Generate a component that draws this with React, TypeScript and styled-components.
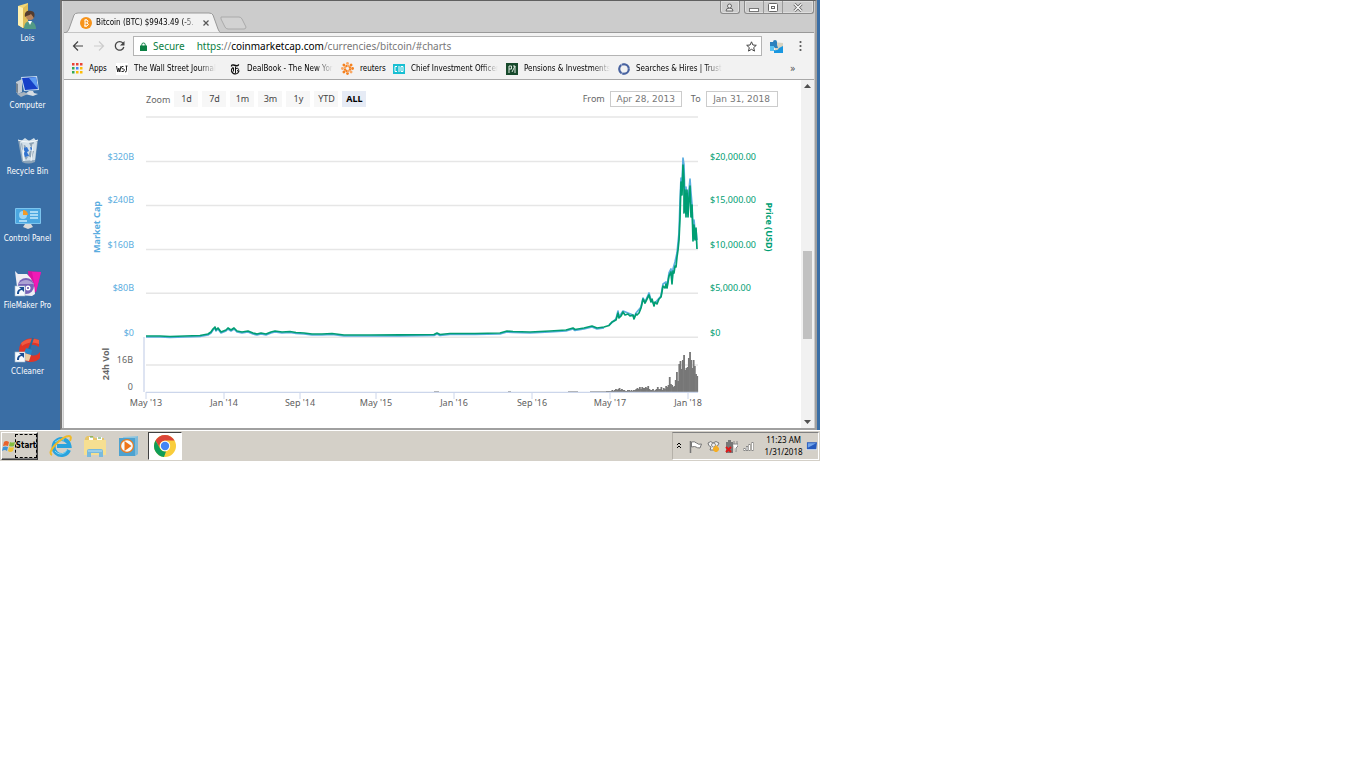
import React from "react";

import styled, { createGlobalStyle } from "styled-components";

const UI_FONT = `"DejaVu Sans Condensed", "Noto Sans", sans-serif`;
const CHART_FONT = `"Noto Sans", sans-serif`;

const GlobalStyle = createGlobalStyle`
  * {
    box-sizing: border-box;
  }
  body {
    margin: 0;
    background: #ffffff;
    font-family: ${UI_FONT};
    font-size: 8px;
    color: #000000;
  }
  button, input, a {
    font-family: inherit;
    font-size: inherit;
    color: inherit;
    padding: 0;
    margin: 0;
    border: 0;
    background: none;
    text-decoration: none;
  }
  svg {
    display: block;
    flex-shrink: 0;
  }
`;

const Screen = styled.div`
  width: 60vw;
  min-width: 819px;
  display: flex;
  flex-direction: column;
`;

const Workspace = styled.div`
  display: flex;
  min-height: 430px;
  background: #3a6ea5;
`;

const DesktopIcons = styled.nav`
  width: 60px;
  height: 400px;
  padding-right: 5px;
  display: grid;
  grid-template-rows: repeat(6, 1fr);
`;

const DesktopIcon = styled.button`
  display: flex;
  flex-direction: column;
  align-items: center;
  gap: 3px;
  padding-top: 3px;
  color: #ffffff;
  line-height: 10px;
  white-space: nowrap;
  cursor: pointer;
`;

const BrowserWindow = styled.main`
  flex: 1;
  min-width: 0;
  margin-right: 3px;
  display: flex;
  flex-direction: column;
  background: #cccccc;
  border: 2px solid #a0a0a0;
  border-top: 1px solid #606060;
  border-left-color: #757575;
  box-shadow: inset 1px 0 #e0e0e0;
  padding: 0 1px 0 2px;
`;

const TitleBar = styled.div`
  height: 31px;
  display: flex;
  align-items: flex-start;
  justify-content: space-between;
`;

const TabStrip = styled.div`
  display: flex;
  padding: 11px 0 0 1px;
`;

const Tab = styled.div`
  position: relative;
  width: 157px;
  height: 21px;
  display: flex;
  align-items: center;
  padding: 0 12px 0 15px;
  gap: 4px;
`;

const TabShape = styled.svg`
  position: absolute;
  top: 0;
  left: 0;
`;

const TabTitle = styled.span`
  position: relative;
  flex: 1;
  overflow: hidden;
  white-space: nowrap;
  line-height: 12px;
  mask-image: linear-gradient(to right, #000 85%, transparent);
`;

const IconButton = styled.button`
  position: relative;
  display: flex;
  align-items: center;
  justify-content: center;
  cursor: pointer;
`;

const NewTab = styled(IconButton)`
  align-items: flex-start;
  padding-top: 4px;
  margin-left: -2px;
`;

const WindowControls = styled.div`
  display: flex;
  gap: 4px;
`;

const ControlGroup = styled.div`
  display: flex;
  height: 13px;
  border: 1px solid #8a8a8a;
  border-top: 0;
  border-radius: 0 0 3px 3px;
  box-shadow: inset 0 0 0 1px #dedede;
`;

const ControlButton = styled(IconButton)<{ $width: number }>`
  width: ${(p) => p.$width}px;
  & + & {
    border-left: 1px solid #999999;
  }
`;

const Toolbar = styled.div`
  height: 26px;
  display: flex;
  align-items: center;
  gap: 8px;
  padding: 1px 8px 0 8px;
  background: #f2f2f2;
  border-top: 1px solid #999999;
`;

const NavButtons = styled.div`
  display: flex;
  gap: 9px;
`;

const Extensions = styled.div`
  display: flex;
  gap: 12px;
`;

const Omnibox = styled.div`
  flex: 1;
  height: 20px;
  display: flex;
  align-items: center;
  padding: 0 4px 0 6px;
  background: #ffffff;
  border: 1px solid #b4b4b4;
  font-family: ${CHART_FONT};
  font-size: 10px;
  line-height: 14px;
`;

const Secure = styled.span`
  color: #0b8043;
  margin: 0 12px 0 6px;
`;

const Url = styled.a`
  flex: 1;
  color: #777777;
  white-space: nowrap;
`;

const Scheme = styled.span`
  color: #0b8043;
`;

const Host = styled.span`
  color: #000000;
`;

const Bookmarks = styled.nav`
  height: 22px;
  display: flex;
  align-items: center;
  padding: 0 18px 0 8px;
  background: #f2f2f2;
  border-bottom: 1px solid #a8a8a8;
`;

const Bookmark = styled.a<{ $width: number; $fade?: boolean }>`
  width: ${(p) => p.$width}px;
  display: flex;
  align-items: center;
  gap: 6px;
  line-height: 12px;
  white-space: nowrap;
  span {
    overflow: ${(p) => (p.$fade ? "hidden" : "visible")};
    margin-right: ${(p) => (p.$fade ? 8 : 0)}px;
    mask-image: ${(p) =>
      p.$fade ? "linear-gradient(to right, #000 80%, transparent)" : "none"};
  }
`;

const More = styled.button`
  margin-left: auto;
  font-size: 10px;
  color: #444444;
`;

const Page = styled.section`
  flex: 1;
  display: flex;
  background: #ffffff;
`;

const ChartArea = styled.div`
  flex: 1;
  min-width: 0;
  padding-top: 11px;
  font-family: ${CHART_FONT};
  font-size: 9px;
  color: #666666;
`;

const Controls = styled.div`
  display: flex;
  justify-content: space-between;
  align-items: center;
  padding: 0 23px 0 82px;
  height: 16px;
`;

const Range = styled.div`
  display: flex;
  align-items: center;
  gap: 4px;
`;

const RangeButton = styled.button<{ $active?: boolean }>`
  width: 24px;
  height: 16px;
  line-height: 14px;
  color: ${(p) => (p.$active ? "#000000" : "#444444")};
  font-weight: ${(p) => (p.$active ? 700 : 400)};
  background: ${(p) => (p.$active ? "#e6ebf5" : "#f7f7f7")};
  cursor: pointer;
`;

const DateLabel = styled.label`
  display: flex;
  align-items: center;
  gap: 5px;
  margin-left: 5px;
  line-height: 14px;
`;

const DateInput = styled.input`
  width: 72px;
  height: 16px;
  padding: 0 4px;
  border: 1px solid #cccccc;
  font-family: "DejaVu Sans", sans-serif;
  font-size: 9px;
  text-align: center;
  color: #777777;
`;

const Plot = styled.svg`
  width: 100%;
  height: 310px;
  margin-top: 1px;
`;

const Scrollbar = styled.div`
  width: 13px;
  display: flex;
  flex-direction: column;
  align-items: center;
  justify-content: space-between;
  background: #f1f1f1;
`;

const Thumb = styled.div`
  width: 9px;
  height: 88px;
  margin-top: 81px;
  background: #c1c1c1;
`;

const Taskbar = styled.footer`
  height: 31px;
  display: flex;
  align-items: center;
  padding: 1px 1px 0 1px;
  background: #d4d0c8;
  box-shadow: inset 0 1px #ffffff;
`;

const StartButton = styled.button`
  width: 37px;
  height: 28px;
  display: flex;
  align-items: center;
  border: 1px solid #404040;
  border-top-color: #ffffff;
  border-left-color: #ffffff;
  box-shadow: inset -1px -1px #808080;
  font-weight: 700;
  cursor: pointer;
`;

const StartLabel = styled.span`
  height: 24px;
  width: 22px;
  line-height: 24px;
  outline: 1px dashed #000000;
  outline-offset: -1px;
  display: flex;
  justify-content: center;
`;

const Launchers = styled.div`
  display: flex;
  padding-left: 6px;
`;

const Launcher = styled(IconButton)<{ $active?: boolean }>`
  width: 34px;
  height: 28px;
  margin-left: ${(p) => (p.$active ? 2 : 0)}px;
  background: ${(p) => (p.$active ? "#ffffff" : "transparent")};
  border: 1px solid ${(p) => (p.$active ? "#ffffff" : "transparent")};
  border-top-color: ${(p) => (p.$active ? "#404040" : "transparent")};
  border-left-color: ${(p) => (p.$active ? "#404040" : "transparent")};
`;

const Tray = styled.div`
  margin-left: auto;
  width: 147px;
  height: 28px;
  display: flex;
  align-items: center;
  padding: 0 1px 0 4px;
  border: 1px solid #ffffff;
  border-top-color: #808080;
  border-left-color: #b5b1a9;
`;

const TrayIcons = styled.div`
  display: flex;
  align-items: center;
  gap: 5px;
  margin-left: 8px;
`;

const Clock = styled.time`
  margin-left: auto;
  margin-right: 3px;
  line-height: 12px;
  text-align: center;
  font-family: ${CHART_FONT};
  white-space: nowrap;
`;

const UserIcon = () => (
  <svg width="26" height="28" viewBox="0 0 26 28">
    <path d="M3 3l10-3v22l-5 3-5-3z" fill="#f3d775" />
    <path d="M3 3l5 2v20l-5-3z" fill="#fff0ae" />
    <path d="M8 5l5-4v21l-5 3z" fill="#e0bd57" />
    <path d="M9 26c0-6 3-8 6-8s6 3 6 8z" fill="#539b86" />
    <path d="M13 18l2 4 2-4z" fill="#ffffff" />
    <circle cx="15" cy="13" r="4" fill="#b8845c" />
    <path d="M10 14c-1-6 3-7 6-6 4 0 4 4 3 7l-3-4c-2 2-4 1-6 3z" fill="#533c2f" />
  </svg>
);

const ComputerIcon = () => (
  <svg width="26" height="28" viewBox="0 0 26 28">
    <path d="M1 12l6-3v13l-4 2-2-2z" fill="#c2cbd4" />
    <path d="M1 13l2 1v9l-2-1z" fill="#76838f" />
    <path d="M6 7l16-1 2 14-15 1z" fill="#c8dcf0" />
    <path d="M7 8l14-1 2 12-13 1z" fill="#1640c8" />
    <path d="M14 8l7-1 2 12z" fill="#5d9bf2" />
    <path d="M14 21l4 0 1 2 4 1-5 2-8-2z" fill="#d7dde3" />
    <path d="M2 24l7-2 4 2-7 3z" fill="#a8b3bd" />
  </svg>
);

const RecycleIcon = () => (
  <svg width="26" height="28" viewBox="0 0 26 28">
    <path d="M3 4l20 0-3 22q-7 3-13 0z" fill="#8ba3b8" />
    <path d="M5 6l5-4 4 3 5-3 3 4-2 18-12 1z" fill="#d3e0e9" />
    <path d="M6 7l5 3-2 6-2-3zM14 7l5-1-2 7zM15 15l4 0-2 7-4-2zM9 20l4 1-2 3z" fill="#8ea4b6" />
    <path d="M8 12l4-1 2 4-2 1 2 4-4 1-2-4 2-1zM15 11l3 1-2 3z" fill="#3173cf" />
    <path d="M3 4q10 4 20 0M8 8l1 17M18 8l-2 17" fill="none" stroke="#f4f9fb" />
  </svg>
);

const ControlPanelIcon = () => (
  <svg width="28" height="28" viewBox="0 0 28 28">
    <rect x="1" y="5" width="26" height="16" rx="1" fill="#7cc4ee" />
    <rect x="2" y="6" width="24" height="14" fill="#4aa6e0" />
    <circle cx="9" cy="12" r="4" fill="#9ad4f5" />
    <path d="M9 12V7a5 5 0 0 1 5 5z" fill="#f39a27" />
    <path d="M16 9h8M16 12h8M16 15h8M5 18h8" stroke="#c9ebfb" strokeWidth="1.4" />
    <path d="M11 21h6l2 3-5 2-5-2z" fill="#dadada" />
  </svg>
);

const Shortcut = () => (
  <>
    <rect x="1" y="16" width="10" height="10" fill="#f7fbff" stroke="#a4b8ca" strokeWidth=".6" />
    <path d="M3 24c0-4 2-5 4-5l-2-2h5v5l-2-2c-2 0-3 1-3 4z" fill="#1c4f93" />
  </>
);

const FileMakerIcon = () => (
  <svg width="28" height="28" viewBox="0 0 28 28">
    <path d="M14 1l13 1-5 20-6 2z" fill="#d813a4" />
    <path d="M18 2l9 0-5 20z" fill="#f01ab6" />
    <path d="M1 1l3 3h9q8 7 8 20l-3 2-14-1z" fill="#f0eef4" />
    <circle cx="12" cy="16" r="8" fill="#7763b7" />
    <path d="M4 14q8-8 16 0z" fill="#aca2d3" />
    <circle cx="14" cy="18" r="2.5" fill="#ffffff" />
    <circle cx="14" cy="18" r="1" fill="#5f4aa4" />
    <Shortcut />
  </svg>
);

const CCleanerIcon = () => (
  <svg width="28" height="28" viewBox="0 0 28 28">
    <path d="M25 4Q19 1 13 3 5 6 5 15q1 10 11 11 7 0 10-4v-6q-4 5-9 3-4-2-3-6 2-5 7-4l4 2z" fill="#df3528" />
    <path d="M7 7q7-6 18-3v4Q16 4 8 10z" fill="#f05a42" />
    <path d="M19 2l-4 12" stroke="#226b9d" strokeWidth="2" />
    <path d="M12 12l6 2-1 5-7-2z" fill="#2685c7" />
    <path d="M10 17l7 2-2 6-6-1z" fill="#eacda2" />
    <Shortcut />
  </svg>
);

const desktopItems = [
  { name: "Lois", Icon: UserIcon },
  { name: "Computer", Icon: ComputerIcon },
  { name: "Recycle Bin", Icon: RecycleIcon },
  { name: "Control Panel", Icon: ControlPanelIcon },
  { name: "FileMaker Pro", Icon: FileMakerIcon },
  { name: "CCleaner", Icon: CCleanerIcon },
];

const AppsIcon = () => (
  <svg width="11" height="11" viewBox="0 0 11 11">
    {["#ea4335", "#ea4335", "#ea4335", "#34a853", "#4285f4", "#fbbc05", "#34a853", "#fbbc05", "#fbbc05"].map(
      (fill, i) => (
        <rect key={i} x={(i % 3) * 4} y={Math.floor(i / 3) * 4} width="2.500" height="2.500" fill={fill} />
      )
    )}
  </svg>
);

const WsjIcon = () => (
  <svg width="12" height="12" viewBox="0 0 12 12">
    <rect width="12" height="12" fill="#ffffff" />
    <path
      d="M.500 3l1.300 6 1-4 1 4L5 3M7.500 3.500q-2-.5-2 1t2 1.500 0 2.500h-2M9 9q1.500 0 1.500-1.500V3M9.500 3h2"
      fill="none"
      stroke="#222222"
    />
  </svg>
);

const TimesIcon = () => (
  <svg width="11" height="12" viewBox="0 0 11 12">
    <path d="M1.500 3.500q0-2 2-1.500l3 .8q2 .2 2-1.500" fill="none" stroke="#111111" strokeWidth="1.400" />
    <path d="M3 4.500q-2 1.500-1.500 3.500 1 3 4 3 3-.5 3.500-3.500" fill="none" stroke="#111111" strokeWidth="1.200" />
    <path d="M5.500 3.500v7M3.500 4.500v4M5.500 5.500q3-1 3 .8t-1.500 1.500" fill="none" stroke="#111111" />
  </svg>
);

const ReutersIcon = () => (
  <svg width="13" height="13" viewBox="0 0 13 13">
    {[0, 1, 2, 3, 4, 5, 6, 7].map((i) => (
      <g key={i} transform={`rotate(${i * 45} 6.5 6.5)`} fill={i % 3 ? "#f58220" : "#f9a763"}>
        <circle cx="6.5" cy="1.4" r="1.4" />
        <circle cx="7.5" cy="4" r="1.2" />
      </g>
    ))}
  </svg>
);

const CioIcon = () => (
  <svg width="12" height="12" viewBox="0 0 12 12">
    <rect y="1" width="12" height="10" fill="#18bfd2" />
    <path d="M4 3.500H2v5h2M6 3v6M8 3.500h2v5H8z" fill="none" stroke="#ffffff" />
  </svg>
);

const PensionsIcon = () => (
  <svg width="12" height="12" viewBox="0 0 12 12">
    <rect width="12" height="12" fill="#174a2c" />
    <path d="M3 10V3h2.500v3H3M6 9l3-6v7M7 3h2" fill="none" stroke="#dce8df" />
  </svg>
);

const RingIcon = () => (
  <svg width="12" height="12" viewBox="0 0 12 12">
    <circle cx="6" cy="6" r="4.800" fill="none" stroke="#9fb0d4" strokeWidth="2" />
    <circle cx="6" cy="6" r="4.800" fill="none" stroke="#49639f" strokeWidth="2" strokeDasharray="9 1" />
  </svg>
);

const bookmarks = [
  { name: "Apps", Icon: AppsIcon, width: 44 },
  { name: "The Wall Street Journal", Icon: WsjIcon, width: 114, fade: true },
  { name: "DealBook - The New York", Icon: TimesIcon, width: 111, fade: true },
  { name: "reuters", Icon: ReutersIcon, width: 52 },
  { name: "Chief Investment Officer", Icon: CioIcon, width: 113, fade: true },
  { name: "Pensions & Investments", Icon: PensionsIcon, width: 112, fade: true },
  { name: "Searches & Hires | Trust", Icon: RingIcon, width: 114, fade: true },
];

const ranges = ["1d", "7d", "1m", "3m", "1y", "YTD", "ALL"];

const xTicks: [number, string][] = [
  [146, "May '13"],
  [224, "Jan '14"],
  [300, "Sep '14"],
  [376, "May '15"],
  [454, "Jan '16"],
  [532, "Sep '16"],
  [610, "May '17"],
  [688, "Jan '18"],
];

const yTicks: [number, string, string][] = [
  [160, "$320B", "$20,000.00"],
  [203, "$240B", "$15,000.00"],
  [248, "$160B", "$10,000.00"],
  [291, "$80B", "$5,000.00"],
  [336, "$0", "$0"],
];

const earlyPrice =
  "146,336 160,336 170,336.500 185,336 200,335.500 208,334 211,332 213,329 215,327 216,330 218,328 221,332 226,330 228,328 231,330 234,328 237,331 242,332 248,331 253,333 257,334 261,333 266,334 271,332 275,331 282,332 290,331.500 296,332.500 304,333 312,334 322,334 332,333.500 344,335 370,335 400,334.800 434,334.500 437,333 440,334.500 450,333.500 475,333.500 500,333 507,331 513,331.500 530,332 550,331 566,330 573,328 575,329.500 584,328 592,326 597,328 604,327";
const latePrice =
  "609,325.500 612,322 616,320 618,313 619,318 621,316 623,312 625,315 628,314 630,316 633,315 634,319 636,314 637,315 639,313 641,308 643,299 645,303 647,299 649,295 651,302 652,299 654,306 655,302 657,304 659,299 661,297 663,286 665,288 666,284 667,288 669,276 671,272 672,284 673,271 674,273 675,266 676,267 677,257 678,250 679,240 680,218 681,182 682,195 683,165 684,180 684,213 685,190 686,217 687,190 688,217 689,198 690,186 691,217 692,205 693,241 694,225 695,240 696,228 697,249";
const lateCap =
  "609,325 616,319 618,311 619,317 623,311 633,315 634,318 636,313 641,307 643,298 645,302 649,293 651,300 654,304 661,296 663,284 666,282 667,287 669,273 671,269 672,281 673,269 675,262 677,253 679,233 680,202 681,178 682,186 683,158 684,165 685,203 686,187 687,205 688,207 689,190 690,179 691,193 692,204 693,229 694,220 695,231 696,230 697,240";

const volume = [
  1, 1, 1, 1, 1, 2, 1, 2, 3, 2, 3, 4, 2, 3, 2, 2, 1, 1, 2, 2, 1, 2, 1, 2, 2, 3, 4, 3, 5, 3, 5, 4, 4, 5, 4, 6, 3, 2, 2, 3,
  1, 2, 3, 5, 3, 3, 5, 2, 4, 3, 6, 5, 7, 15, 8, 7, 5, 6, 12, 20, 11, 28, 31, 23, 32, 37, 22, 24, 25, 34, 40, 32, 24, 32, 26,
  18, 16,
];

const PriceChart = () => (
  <Plot viewBox="64 108 736 310" preserveAspectRatio="xMinYMin meet" role="img" aria-label="Bitcoin charts">
    <g stroke="#e6e6e6" strokeWidth="1.500">
      {[117, 161.5, 205.5, 249.5, 293.300, 337.200, 365].map((y) => (
        <path key={y} d={`M146 ${y}H698`} />
      ))}
    </g>
    <g fill="#777777">
      {volume.map((h, i) => (
        <rect key={i} x={605.5 + i * 1.195} y={392 - h} width="1.800" height={h} />
      ))}
    </g>
    <path d="M434 391.500h5M508 391.500h3M568 391.500h10M590 391.500h16" stroke="#aaaaaa" />
    <path d="M144 337V392" stroke="#ccd6eb" strokeWidth="1.300" />
    <path d="M146 392.300H698" stroke="#ccd6eb" strokeWidth="1.300" />
    {xTicks.map(([x, label]) => (
      <g key={label}>
        <path d={`M${x} 392v7`} stroke="#ccd6eb" />
        <text x={x} y="406" textAnchor="middle" fill="#606060" fontSize="9">
          {label}
        </text>
      </g>
    ))}
    <g fill="none" strokeLinejoin="round" strokeWidth="1.700">
      <polyline points={earlyPrice} transform="translate(0 1)" stroke="#5bade0" />
      <polyline points={lateCap} stroke="#5bade0" />
      <polyline points={`${earlyPrice} ${latePrice}`} stroke="#009e73" />
    </g>
    <g fontSize="9">
      {yTicks.map(([y, cap, price]) => (
        <g key={y}>
          <text x="134" y={y} textAnchor="end" fill="#5bade0">
            {cap}
          </text>
          <text x="710" y={y} fill="#009e73">
            {price}
          </text>
        </g>
      ))}
      <text x="133" y="363" textAnchor="end" fill="#666666">
        16B
      </text>
      <text x="133" y="390" textAnchor="end" fill="#666666">
        0
      </text>
      <g fontWeight="700" textAnchor="middle">
        <text transform="translate(100 227) rotate(-90)" fill="#5bade0">
          Market Cap
        </text>
        <text transform="translate(766 227) rotate(90)" fill="#009e73">
          Price (USD)
        </text>
        <text transform="translate(109 364) rotate(-90)" fill="#666666">
          24h Vol
        </text>
      </g>
    </g>
  </Plot>
);

const Arrow = ({ color, flip }: { color: string; flip?: boolean }) => (
  <svg width="12" height="12" viewBox="0 0 12 12">
    <path
      d={flip ? "M1 6h9M6 1.500L10.500 6 6 10.500" : "M11 6H2M6 1.500L1.500 6 6 10.500"}
      fill="none"
      stroke={color}
      strokeWidth="1.200"
    />
  </svg>
);

function Browser() {
  const [range, setRange] = React.useState("ALL");

  return (
    <BrowserWindow>
      <TitleBar>
        <TabStrip>
          <Tab>
            <TabShape width="156" height="21" viewBox="0 0 156 21">
              <path d="M0 21Q3 20 4 17L9 3q1-2 4-2h131q3 0 4 2l5 14q1 3 3 4z" fill="#f2f2f2" stroke="#999999" />
            </TabShape>
            <IconButton as="span">
              <svg width="12" height="12" viewBox="0 0 12 12">
                <circle cx="6" cy="6" r="6" fill="#f7931a" />
                <path d="M4.500 3h2.500q2 1 0 3 3 1 0 3H4M5 3v6M5 6h2M6 2v1M6 9v1" fill="none" stroke="#ffffff" />
              </svg>
            </IconButton>
            <TabTitle>Bitcoin (BTC) $9943.49 (-5.</TabTitle>
            <IconButton aria-label="Close tab">
              <svg width="8" height="8" viewBox="0 0 8 8">
                <path d="M1.500 1.500l5 5M6.500 1.500l-5 5" stroke="#555555" strokeWidth="1.200" />
              </svg>
            </IconButton>
          </Tab>
          <NewTab aria-label="New tab">
            <svg width="27" height="14" viewBox="0 0 27 14">
              <path d="M1 1h18q2 0 3 2l4 8q0 2-2 2H8q-2 0-3-2L1 3z" fill="#d2d2d2" stroke="#aaaaaa" />
            </svg>
          </NewTab>
        </TabStrip>
        <WindowControls>
          <ControlGroup>
            <ControlButton $width={18} aria-label="Profile">
              <svg width="9" height="9" viewBox="0 0 9 9" fill="#eeeeee" stroke="#666666">
                <path d="M1 8q0-3 3.500-3T8 8z" />
                <circle cx="4.500" cy="3" r="2" />
              </svg>
            </ControlButton>
          </ControlGroup>
          <ControlGroup>
            <ControlButton $width={18} aria-label="Minimize">
              <svg width="10" height="9" viewBox="0 0 10 9">
                <rect x=".5" y="5.500" width="9" height="3" fill="#ffffff" stroke="#777777" />
              </svg>
            </ControlButton>
            <ControlButton $width={19} aria-label="Restore">
              <svg width="10" height="9" viewBox="0 0 10 9">
                <rect x=".5" y=".5" width="9" height="8" rx="1" fill="#ffffff" stroke="#666666" />
                <rect x="3.500" y="3.500" width="3" height="2" fill="#ffffff" stroke="#666666" />
              </svg>
            </ControlButton>
            <ControlButton $width={31} aria-label="Close">
              <svg width="10" height="9" viewBox="0 0 10 9">
                <path d="M1.500 1l7 7M8.500 1l-7 7" stroke="#666666" strokeWidth="3" />
                <path d="M1.500 1l7 7M8.500 1l-7 7" stroke="#ffffff" strokeWidth="1.300" />
              </svg>
            </ControlButton>
          </ControlGroup>
        </WindowControls>
      </TitleBar>
      <Toolbar>
        <NavButtons>
          <IconButton aria-label="Back">
            <Arrow color="#444444" />
          </IconButton>
          <IconButton aria-label="Forward">
            <Arrow color="#cccccc" flip />
          </IconButton>
          <IconButton aria-label="Reload">
            <svg width="11" height="12" viewBox="0 0 11 12">
              <path d="M9 3.200A4.300 4.300 0 1 0 9.800 7" fill="none" stroke="#444444" strokeWidth="1.300" />
              <path d="M10.500 1v4.500H6z" fill="#444444" />
            </svg>
          </IconButton>
        </NavButtons>
        <Omnibox>
          <svg width="7" height="9" viewBox="0 0 7 9">
            <path d="M1.800 4V2.500q0-1.500 1.700-1.500t1.700 1.500V4" fill="none" stroke="#0b8043" />
            <rect x="0" y="3.500" width="7" height="5.500" fill="#0b8043" />
          </svg>
          <Secure>Secure</Secure>
          <Url href="#charts">
            <Scheme>https</Scheme>://<Host>coinmarketcap.com</Host>/currencies/bitcoin/#charts
          </Url>
          <IconButton aria-label="Bookmark this page">
            <svg width="11" height="11" viewBox="0 0 11 11">
              <path d="M5.500 .8l1.400 3.200 3.400.3-2.600 2.300.8 3.500-3-1.800-3 1.800.8-3.500L.7 4.300l3.400-.3z" fill="none" stroke="#444444" />
            </svg>
          </IconButton>
        </Omnibox>
        <Extensions>
          <IconButton aria-label="Extension">
            <svg width="13" height="13" viewBox="0 0 13 13">
              <path d="M3 2l10 1v10H6z" fill="#d8d3c1" />
              <path d="M0 2h3q0-2 2-2t2 2v3l1 3H5L3 6H0z" fill="#2a80bd" />
              <path d="M0 6h4v5H0z" fill="#57c2f2" />
              <path d="M4 10q4 1 5-2l4-2v7H4z" fill="#1997e0" />
            </svg>
          </IconButton>
          <IconButton aria-label="Menu">
            <svg width="11" height="12" viewBox="0 0 11 12" fill="#555555">
              <circle cx="5.500" cy="2" r="1.100" />
              <circle cx="5.500" cy="6" r="1.100" />
              <circle cx="5.500" cy="10" r="1.100" />
            </svg>
          </IconButton>
        </Extensions>
      </Toolbar>
      <Bookmarks>
        {bookmarks.map(({ name, Icon, width, fade }) => (
          <Bookmark key={name} href="#" $width={width} $fade={fade}>
            <Icon />
            <span>{name}</span>
          </Bookmark>
        ))}
        <More aria-label="More bookmarks">»</More>
      </Bookmarks>
      <Page>
        <ChartArea>
          <Controls>
            <Range>
              <span>Zoom</span>
              {ranges.map((r) => (
                <RangeButton key={r} $active={r === range} onClick={() => setRange(r)}>
                  {r}
                </RangeButton>
              ))}
            </Range>
            <Range>
              <DateLabel>
                From
                <DateInput defaultValue="Apr 28, 2013" />
              </DateLabel>
              <DateLabel>
                To
                <DateInput defaultValue="Jan 31, 2018" />
              </DateLabel>
            </Range>
          </Controls>
          <PriceChart />
        </ChartArea>
        <Scrollbar>
          <svg width="13" height="13" viewBox="0 0 13 13">
            <path d="M3 8l3.500-4L10 8z" fill="#505050" />
          </svg>
          <Thumb />
          <svg width="13" height="13" viewBox="0 0 13 13">
            <path d="M3 5l3.500 4L10 5z" fill="#505050" />
          </svg>
        </Scrollbar>
      </Page>
    </BrowserWindow>
  );
}

function App() {
  return (
    <>
      <GlobalStyle />
      <Screen>
        <Workspace>
          <DesktopIcons>
            {desktopItems.map(({ name, Icon }) => (
              <DesktopIcon key={name}>
                <Icon />
                {name}
              </DesktopIcon>
            ))}
          </DesktopIcons>
          <Browser />
        </Workspace>
        <Taskbar>
          <StartButton>
            <svg width="13" height="13" viewBox="0 0 13 13">
              <path d="M2 2q2-2 5 0L6 6Q4 5 1 6z" fill="#e9622b" />
              <path d="M8 2q2 1 5 0l-1 4q-3 1-5 0z" fill="#83bd3e" />
              <path d="M1 7q2-1 5 0l-1 4q-2-2-5 0z" fill="#3c92d6" />
              <path d="M7 7q2 1 5 0l-1 4q-3 2-5 0z" fill="#f4c233" />
            </svg>
            <StartLabel>Start</StartLabel>
          </StartButton>
          <Launchers>
            <Launcher aria-label="Internet Explorer">
              <svg width="24" height="24" viewBox="0 0 24 24">
                <path d="M20 16a8 8 0 1 1 .5-4H8" fill="none" stroke="#2aa3dd" strokeWidth="4" />
                <path d="M18 16a7 7 0 0 1-12 1M6 8q4-4 9-2" fill="none" stroke="#84d9f6" strokeWidth="1" />
                <path d="M3 21Q-1 19 6 11 15 2 20 2q3 0 1 5" fill="none" stroke="#efb928" strokeWidth="2" />
              </svg>
            </Launcher>
            <Launcher aria-label="Explorer">
              <svg width="24" height="24" viewBox="0 0 24 24">
                <path d="M2 4l2-2h6l2 2h9l1 17H1z" fill="#e6c569" />
                <path d="M6 3h4v3H6zM14 3h5v3h-5z" fill="#ffffff" />
                <path d="M7 3h3M15 4h3" stroke="#4f9f4a" />
                <path d="M1 6h22v15H1z" fill="#f6df91" />
                <path d="M4 23v-6q0-2 2-2h12q2 0 2 2v6h-4v-4H8v4z" fill="#79badd" />
                <path d="M5 17h14" stroke="#b9e1f5" />
              </svg>
            </Launcher>
            <Launcher aria-label="Media Player">
              <svg width="22" height="24" viewBox="0 0 22 24">
                <path d="M5 3l15-1v18l-3 2H5z" fill="#8ec7e2" />
                <path d="M1 4h16v18H1z" fill="#4da2d0" />
                <path d="M17 4l3-2v18l-3 2z" fill="#7fbbda" />
                <circle cx="9" cy="12" r="7" fill="#ef7a1b" />
                <circle cx="9" cy="12" r="5.800" fill="#f6fafc" />
                <path d="M6.500 7l7 5-7 5z" fill="#ef751a" />
              </svg>
            </Launcher>
            <Launcher $active aria-label="Chrome">
              <svg width="22" height="22" viewBox="0 0 22 22">
                <circle cx="11" cy="11" r="11" fill="#f9cd3c" />
                <path d="M1.500 5.500A11 11 0 0 1 20.500 5.500H11A5.500 5.500 0 0 0 6.200 13.800z" fill="#db4437" />
                <path d="M1.500 5.500L6.200 13.800Q8 17 12 16.500L10 22A11 11 0 0 1 1.500 5.500z" fill="#0f9d58" />
                <circle cx="11" cy="11" r="5.200" fill="#ffffff" />
                <circle cx="11" cy="11" r="4.200" fill="#4285f4" />
              </svg>
            </Launcher>
          </Launchers>
          <Tray>
            <svg width="4" height="8" viewBox="0 0 4 8">
              <path d="M0 3l2-2 2 2M0 6l2-2 2 2" fill="none" stroke="#000000" />
            </svg>
            <TrayIcons>
              <svg width="13" height="13" viewBox="0 0 13 13">
                <path d="M1.500 1v12" stroke="#777777" strokeWidth="1.500" />
                <path d="M2.500 2q3-1 5 1t5 1L11 8q-3 0-4-1t-4.500 0z" fill="#ffffff" stroke="#777777" />
              </svg>
              <svg width="13" height="13" viewBox="0 0 13 13">
                <path d="M1 3q3-3 5 0 3-3 6 0-1 4-4 4l2 3H3l1-3Q1 6 1 3z" fill="#f0f0f0" stroke="#777777" />
                <circle cx="6.500" cy="5" r="2" fill="none" stroke="#888888" />
                <path d="M9 5l3 3v2l-2 2H8l-2-2V8z" fill="#f5ae24" />
              </svg>
              <svg width="13" height="13" viewBox="0 0 13 13">
                <path d="M1 2h7v11H1zM3 0h3v2H3z" fill="#777777" />
                <path d="M9 1v3M12 1v3M8 4h5v2l-2 2v4" stroke="#888888" fill="#ffffff" />
                <path d="M1 7l5 5M6 7l-5 5" stroke="#e01818" strokeWidth="2" />
              </svg>
              <svg width="11" height="10" viewBox="0 0 11 10">
                <path d="M1.500 7v3M4 5v5M6.500 3v7M9.500 1v9" stroke="#888888" strokeWidth="2" />
                <path d="M1.500 8v1M4 6v3M6.500 4v5M9.500 2v7" stroke="#ffffff" />
              </svg>
            </TrayIcons>
            <Clock>
              11:23 AM
              <br />
              1/31/2018
            </Clock>
            <svg width="11" height="10" viewBox="0 0 12 10">
              <path d="M1 1h11L11 9H1z" fill="#2459be" />
              <path d="M2 2h9L2 7z" fill="#72a4e9" />
              <path d="M0 9h12" stroke="#d4e2f4" />
            </svg>
          </Tray>
        </Taskbar>
      </Screen>
    </>
  );
}

export default App;
